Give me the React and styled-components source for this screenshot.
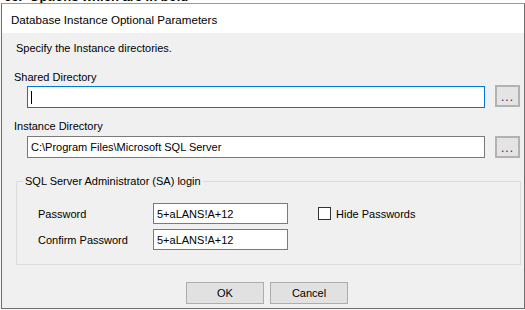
import React from 'react';
import styled, { createGlobalStyle } from 'styled-components';

const GlobalStyle = createGlobalStyle`
  html, body {
    margin: 0;
    padding: 0;
    background: #f7f7f7;
  }
  body {
    font-family: "Liberation Sans", Arial, sans-serif;
    font-size: 11px;
    color: #000;
  }
`;

const Screen = styled.div`
  width: 525px;
  height: 310px;
  overflow: hidden;
  background: #f7f7f7;
`;

const BehindStrip = styled.div`
  height: 3px;
  overflow: hidden;
  background: #ffffff;
  padding-left: 4px;
`;

const BehindText = styled.div`
  font-weight: bold;
  font-size: 13px;
  line-height: 13px;
  margin-top: -10px;
  white-space: nowrap;
`;

const Window = styled.div`
  margin-left: 1px;
  width: 524px;
  height: 306px;
  box-sizing: border-box;
  border: 1px solid #6e6e6e;
  border-top-color: #8d9db0;
  display: flex;
  flex-direction: column;
`;

const TitleBar = styled.div`
  height: 29px;
  background: #fff;
  display: flex;
  align-items: center;
  padding-left: 9px;
  padding-top: 1px;
  box-sizing: border-box;
  font-size: 11.6px;
`;

const Body = styled.div`
  flex: 1;
  background: #f0f0f0;
  padding: 0 0 0 12px;
  display: flex;
  flex-direction: column;
`;

const Intro = styled.div`
  margin-top: 7px;
  padding-left: 2px;
  line-height: 16px;
`;

const FieldLabel = styled.div`
  margin-top: ${(p) => p.$top}px;
  line-height: 15px;
`;

const PathRow = styled.div`
  display: flex;
  align-items: flex-start;
  margin-top: ${(p) => p.$top}px;
  margin-left: 13px;
  gap: 10px;
`;

const TextBox = styled.div`
  width: ${(p) => p.$width}px;
  height: ${(p) => p.$height || 22}px;
  margin-top: ${(p) => p.$offset || 0}px;
  box-sizing: border-box;
  border: 1px solid ${(p) => (p.$focused ? '#0078d7' : '#7a7a7a')};
  background: #fff;
  padding-left: 3px;
  display: flex;
  align-items: center;
  white-space: nowrap;
  overflow: hidden;
`;

const Caret = styled.span`
  display: inline-block;
  width: 1px;
  height: 13px;
  background: #000;
`;

const BrowseButton = styled.div`
  width: 25px;
  height: 22px;
  box-sizing: border-box;
  border: 2px solid #b2b2b2;
  background: #e4e4e4;
  display: flex;
  align-items: flex-end;
  justify-content: center;
  padding-bottom: 2px;
  font-size: 12px;
  line-height: 12px;
  letter-spacing: 1px;
  color: #1a1a5a;
`;

const Group = styled.fieldset`
  margin: 15px 0 0 2px;
  width: 505px;
  box-sizing: border-box;
  border: 1px solid #dcdcdc;
  padding: 14px 0 14px 6px;
`;

const Legend = styled.legend`
  padding: 0 2px;
  margin-left: 0;
  line-height: 16px;
`;

const LoginGrid = styled.div`
  display: grid;
  grid-template-columns: 115px 135px auto;
  grid-auto-rows: 21px;
  row-gap: 5px;
  align-items: center;
  margin-left: 15px;
`;

const CheckRow = styled.label`
  display: flex;
  align-items: center;
  gap: 5px;
  margin-left: 30px;
`;

const CheckBox = styled.span`
  width: 13px;
  height: 13px;
  box-sizing: border-box;
  border: 1px solid #333;
  background: #fff;
`;

const ButtonRow = styled.div`
  display: flex;
  gap: 6px;
  margin-top: 17px;
  padding-left: 172px;
`;

const DialogButton = styled.div`
  width: 78px;
  height: 22px;
  box-sizing: border-box;
  border: 1px solid #adadad;
  background: #e1e1e1;
  display: flex;
  align-items: center;
  justify-content: center;
`;

const PASSWORD = '5+aLANS!A+12';

export default function App() {
  return (
    <>
      <GlobalStyle />
      <Screen>
        <BehindStrip>
          <BehindText>ce.&nbsp;&nbsp;Options which are in bold</BehindText>
        </BehindStrip>
        <Window>
          <TitleBar>Database Instance Optional Parameters</TitleBar>
          <Body>
            <Intro>Specify the Instance directories.</Intro>

            <FieldLabel $top={14}>Shared Directory</FieldLabel>
            <PathRow $top={0}>
              <TextBox $width={458} $offset={1} $focused>
                <Caret />
              </TextBox>
              <BrowseButton>...</BrowseButton>
            </PathRow>

            <FieldLabel $top={11}>Instance Directory</FieldLabel>
            <PathRow $top={2}>
              <TextBox $width={458}>C:\Program Files\Microsoft SQL Server</TextBox>
              <BrowseButton>...</BrowseButton>
            </PathRow>

            <Group>
              <Legend>SQL Server Administrator (SA) login</Legend>
              <LoginGrid>
                <span>Password</span>
                <TextBox $width={135} $height={21}>{PASSWORD}</TextBox>
                <CheckRow>
                  <CheckBox />
                  Hide Passwords
                </CheckRow>
                <span>Confirm Password</span>
                <TextBox $width={135} $height={21}>{PASSWORD}</TextBox>
              </LoginGrid>
            </Group>

            <ButtonRow>
              <DialogButton>OK</DialogButton>
              <DialogButton>Cancel</DialogButton>
            </ButtonRow>
          </Body>
        </Window>
      </Screen>
    </>
  );
}
